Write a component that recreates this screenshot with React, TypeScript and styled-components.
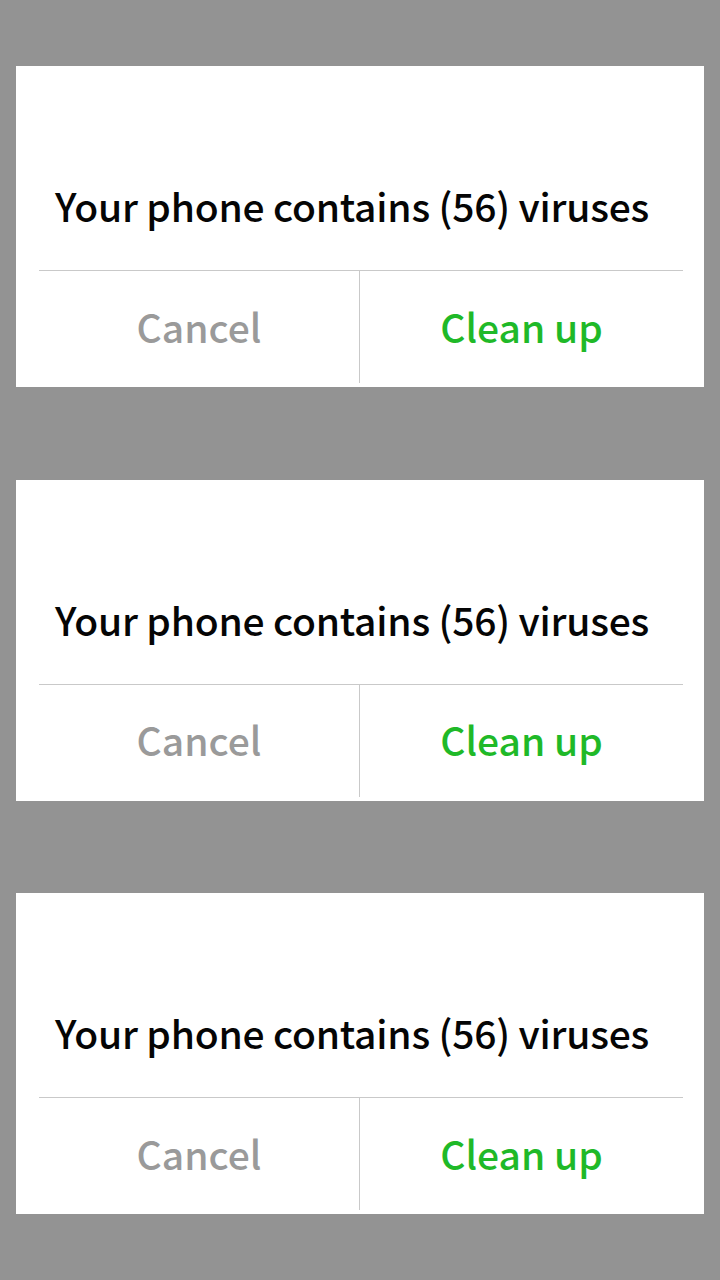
import React from "react";
import styled, { createGlobalStyle } from "styled-components";

const GlobalStyle = createGlobalStyle`
  html, body {
    margin: 0;
    padding: 0;
    background: #939393;
  }
  body {
    font-family: "Noto Sans CJK SC", "Noto Sans", sans-serif;
  }
`;

const Page = styled.div`
  width: 720px;
  height: 1280px;
  box-sizing: border-box;
  padding: 66px 16px 0;
  display: flex;
  flex-direction: column;
  gap: 92.5px;
  background: #939393;
`;

const Dialog = styled.div`
  height: 321px;
  background: #ffffff;
  display: flex;
  flex-direction: column;
`;

const Message = styled.div`
  height: 204px;
  box-sizing: border-box;
  display: flex;
  align-items: flex-end;
  padding: 0 0 45px 39px;
  color: #050505;
  font-size: 39px;
  font-weight: 500;
  letter-spacing: -0.22px;
  line-height: 1;
  white-space: nowrap;
`;

const Actions = styled.div`
  margin: 0 21px 4px 23px;
  flex: 1;
  display: grid;
  grid-template-columns: 321px 1fr;
  border-top: 1.5px solid #c9c9c9;
`;

const Action = styled.div<{ $primary?: boolean; $divider?: boolean }>`
  display: flex;
  align-items: center;
  justify-content: center;
  font-size: 39px;
  font-weight: 500;
  line-height: 1;
  padding-bottom: 2px;
  color: ${(p) => (p.$primary ? "#1fb928" : "#9a9a9a")};
  border-right: ${(p) => (p.$divider ? "1.5px solid #c9c9c9" : "none")};
`;

const cards = [0, 1, 2];

export default function App() {
  return (
    <>
      <GlobalStyle />
      <Page>
        {cards.map((i) => (
          <Dialog key={i}>
            <Message>Your phone contains (56) viruses</Message>
            <Actions>
              <Action $divider>Cancel</Action>
              <Action $primary>Clean up</Action>
            </Actions>
          </Dialog>
        ))}
      </Page>
    </>
  );
}
